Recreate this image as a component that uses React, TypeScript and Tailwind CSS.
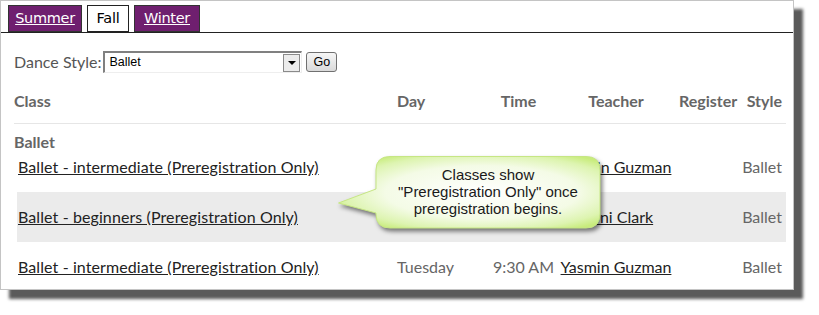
const lato = { fontFamily: 'Lato, "Open Sans", sans-serif' }

type Row = { title: string; day: string; time: string; teacher: string; style: string; h: string; shade?: boolean }

const rows: Row[] = [
  { title: 'Ballet - intermediate (Preregistration Only)', day: '', time: '', teacher: 'Yasmin Guzman', style: 'Ballet', h: 'h-[40px] items-start pt-[5px]' },
  { title: 'Ballet - beginners (Preregistration Only)', day: '', time: '', teacher: 'Noni Clark', style: 'Ballet', h: 'h-[50px] items-center', shade: true },
  { title: 'Ballet - intermediate (Preregistration Only)', day: 'Tuesday', time: '9:30 AM', teacher: 'Yasmin Guzman', style: 'Ballet', h: 'h-[50px] items-center' },
]

function Tab({ label, active, w }: { label: string; active?: boolean; w: string }) {
  return (
    <div
      className={`${w} h-[27px] flex items-center justify-center border text-[14.5px] ${
        active ? 'bg-white border-[#222] text-black' : 'bg-[#6f1f6f] border-[#333] text-white underline'
      }`}
      style={{ fontFamily: '"DejaVu Sans", Tahoma, sans-serif', letterSpacing: '-0.3px' }}
    >
      {label}
    </div>
  )
}

function Callout() {
  return (
    <div className="absolute left-[338px] top-[156px] w-[268px] h-[80px]">
      <svg width="268" height="80" viewBox="0 0 268 80" className="drop-shadow-[2px_3px_2px_rgba(0,0,0,0.5)]">
        <defs>
          <radialGradient id="glow" cx="0.55" cy="0.5" r="0.62">
            <stop offset="0%" stopColor="#ffffff" />
            <stop offset="60%" stopColor="#f4fbe6" />
            <stop offset="86%" stopColor="#ddf4b0" />
            <stop offset="100%" stopColor="#c8ec7c" />
          </radialGradient>
        </defs>
        <path
          d="M52 0.5 H248 Q262 0.5 262 14 V58 Q262 72 248 72 H52 Q38 72 38 58 V57 L0.5 47 L38 33 V14 Q38 0.5 52 0.5 Z"
          fill="url(#glow)"
          stroke="#c6e684"
          strokeWidth="1"
        />
      </svg>
      <div
        className="absolute left-[38px] top-[10px] w-[224px] text-center text-[15px] leading-[17px] text-[#1a1a1a]"
        style={{ fontFamily: '"Liberation Sans", Arial, sans-serif' }}
      >
        Classes show
        <br />
        "Preregistration Only" once
        <br />
        preregistration begins.
      </div>
    </div>
  )
}

export default function App() {
  return (
    <div className="relative w-[819px] h-[315px] bg-white">
      <div
        className="w-[794px] h-[290px] border border-[#c4c4c4] bg-white overflow-hidden shadow-[9px_9px_3px_#5a5a5a]"
        style={lato}
      >
        <div className="h-[32px] border-b border-[#222] flex items-end gap-[5px] pl-[7px]">
          <Tab label="Summer" w="w-[74px]" />
          <Tab label="Fall" w="w-[42px]" active />
          <Tab label="Winter" w="w-[66px]" />
        </div>

        <div className="pl-[13px] pr-[7px]">
          <div className="mt-[18px] flex items-center h-[22px]">
            <span className="text-[16px] text-[#555] mr-[2px]">Dance Style:</span>
            <div className="w-[199px] h-[22px] flex items-center border-t-2 border-l-2 border-b border-r border-t-[#808080] border-l-[#808080] border-b-[#eeeeee] border-r-[#eeeeee] bg-white">
              <span
                className="flex-1 pl-[4px] text-[12.5px] text-black"
                style={{ fontFamily: '"Liberation Sans", Tahoma, sans-serif' }}
              >
                Ballet
              </span>
              <div className="w-[17px] h-[18px] mr-[1px] border border-[#8a8a8a] bg-[#ececec] flex items-center justify-center">
                <div className="w-0 h-0 border-l-[4px] border-r-[4px] border-t-[4px] border-l-transparent border-r-transparent border-t-black" />
              </div>
            </div>
            <div
              className="ml-[4px] w-[31px] h-[20px] rounded-[3px] border border-[#707070] bg-gradient-to-b from-[#f6f6f6] to-[#dadada] flex items-center justify-center text-[12.5px] text-black"
              style={{ fontFamily: '"Liberation Sans", Tahoma, sans-serif' }}
            >
              Go
            </div>
          </div>

          <div className="mt-[17px] h-[34px] border-b border-[#e6e6e6] grid grid-cols-[371px_95px_77px_118px_67px_43px] leading-[22px] text-[16px] font-bold text-[#666]">
            <div>Class</div>
            <div className="pl-[12px]">Day</div>
            <div className="text-center">Time</div>
            <div className="text-center">Teacher</div>
            <div className="pl-[4px]">Register</div>
            <div className="text-right pr-[3px]">Style</div>
          </div>

          <div className="mt-[8px] h-[20px] leading-[20px] text-[16px] font-bold text-[#666]">Ballet</div>

          {rows.map((r, i) => (
            <div
              key={i}
              className={`ml-[3px] grid grid-cols-[368px_95px_77px_118px_67px_43px] ${r.h} leading-[20px] text-[16px] ${
                r.shade ? 'bg-[#ebebeb]' : ''
              }`}
            >
              <div className="pl-[1px]">
                <span className="underline text-[#222] tracking-[0.1px]">{r.title}</span>
              </div>
              <div className="pl-[12px] text-[#666]">{r.day}</div>
              <div className="pl-[10px] text-center text-[#666] whitespace-nowrap">{r.time}</div>
              <div className="text-center">
                <span className="underline text-[#222] whitespace-nowrap">{r.teacher}</span>
              </div>
              <div />
              <div className="text-right pr-[3px] text-[#666]">{r.style}</div>
            </div>
          ))}
        </div>
      </div>
      <Callout />
    </div>
  )
}
